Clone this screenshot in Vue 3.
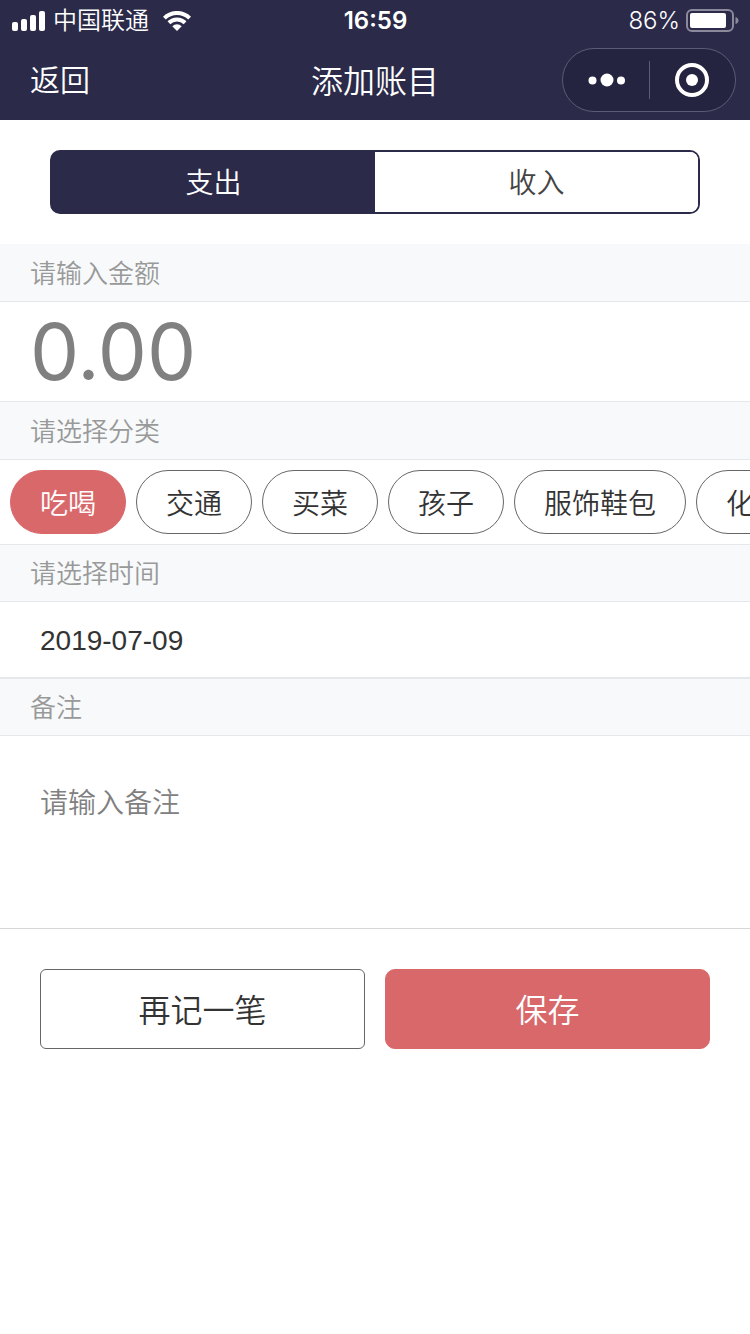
<template>
  <div class="page">
    <header class="header">
      <div class="status-bar">
        <div class="status-left">
          <svg class="signal" width="34" height="20" viewBox="0 0 34 20" aria-hidden="true">
            <rect x="0" y="11" width="6" height="9" rx="2" />
            <rect x="9" y="8" width="6" height="12" rx="2" />
            <rect x="18" y="4" width="6" height="16" rx="2" />
            <rect x="27" y="0" width="6" height="20" rx="2" />
          </svg>
          <span>中国联通</span>
          <svg class="wifi" width="28" height="20" viewBox="0 0 28 20" aria-hidden="true">
            <path d="M14 20l-4.7-4.8a6.7 6.7 0 0 1 9.4 0z" />
            <path class="wave" d="M5.9 11.7a11.6 11.6 0 0 1 16.2 0" />
            <path class="wave" d="M1.4 7.1a18 18 0 0 1 25.2 0" />
          </svg>
        </div>
        <span class="status-time">16:59</span>
        <div class="status-right">
          <span>86%</span>
          <svg class="battery" width="53" height="24" viewBox="0 0 53 24" aria-hidden="true">
            <rect class="shell" x="1" y="1" width="46" height="21" rx="5" />
            <rect class="level" x="4" y="4" width="36" height="15" rx="2" />
            <path class="cap" d="M49.5 8c4 1 4 6 0 7z" />
          </svg>
        </div>
      </div>
      <nav class="nav-bar">
        <a class="back" href="#" @click.prevent>返回</a>
        <h1 class="nav-title">添加账目</h1>
        <div class="capsule">
          <button class="capsule-button" type="button" aria-label="更多">
            <svg width="38" height="14" viewBox="0 0 38 14">
              <circle cx="5.5" cy="7.5" r="4" />
              <circle cx="20" cy="7" r="6.5" />
              <circle cx="34" cy="7.5" r="4" />
            </svg>
          </button>
          <button class="capsule-button" type="button" aria-label="关闭">
            <svg width="34" height="34" viewBox="0 0 34 34">
              <circle class="ring" cx="17" cy="17" r="15" />
              <circle cx="17" cy="17" r="6" />
            </svg>
          </button>
        </div>
      </nav>
    </header>

    <main>
      <div class="tabs">
        <button
          v-for="tab in tabs"
          :key="tab.value"
          type="button"
          class="tab"
          :class="{ active: form.type === tab.value }"
          @click="form.type = tab.value"
        >{{ tab.label }}</button>
      </div>

      <form @submit.prevent>
        <label class="section-title" for="amount">请输入金额</label>
        <input id="amount" v-model="form.amount" class="amount" type="text" inputmode="decimal" placeholder="0.00" />

        <div id="categoryTitle" class="section-title">请选择分类</div>
        <div class="categories" role="group" aria-labelledby="categoryTitle">
          <button
            v-for="item in categories"
            :key="item"
            type="button"
            class="category"
            :class="{ active: form.category === item }"
            @click="form.category = item"
          >{{ item }}</button>
        </div>

        <label class="section-title line-top" for="date">请选择时间</label>
        <input id="date" v-model="form.date" class="date" type="text" readonly />

        <label class="section-title line-top" for="remark">备注</label>
        <textarea id="remark" v-model="form.remark" class="remark" placeholder="请输入备注"></textarea>

        <div class="actions">
          <button class="action" type="button" @click="reset">再记一笔</button>
          <button class="action primary" type="submit">保存</button>
        </div>
      </form>
    </main>
  </div>
</template>

<script setup>
import { ref } from 'vue'

const tabs = [
  { value: 'expense', label: '支出' },
  { value: 'income', label: '收入' }
]

const categories = ['吃喝', '交通', '买菜', '孩子', '服饰鞋包', '化妆']

const form = ref({
  type: 'expense',
  amount: '',
  category: '吃喝',
  date: '2019-07-09',
  remark: ''
})

const reset = () => {
  form.value.amount = ''
  form.value.remark = ''
}
</script>

<style>
body {
  margin: 0;
  background: #fff;
}
</style>

<style scoped>
.page {
  font-family: "Liberation Sans", "Noto Sans CJK SC", sans-serif;
  font-weight: 350;
  color: #333;
}

button,
input,
textarea {
  box-sizing: border-box;
  margin: 0;
  padding: 0;
  border: none;
  border-radius: 0;
  outline: none;
  background: none;
  color: inherit;
  font: inherit;
}

button {
  cursor: pointer;
}

.header {
  background: #2b2a49;
  color: #fff;
}

/* 状态栏 */
.status-bar {
  box-sizing: border-box;
  display: grid;
  grid-template-columns: 1fr auto 1fr;
  align-items: center;
  height: 40px;
  padding: 2px 11px 0 12px;
  font-family: Inter, "Noto Sans CJK SC", sans-serif;
  font-size: 24px;
  line-height: 38px;
}

.status-left,
.status-right {
  display: flex;
  align-items: center;
}

.status-left {
  gap: 7px;
}

.status-right {
  justify-content: flex-end;
  gap: 6px;
}

.status-time {
  font-weight: 600;
}

.signal,
.wifi {
  fill: #fff;
}

.wifi {
  margin-left: 7px;
}

.wave {
  fill: none;
  stroke: #fff;
  stroke-width: 4;
}

.shell {
  fill: none;
  stroke: #8b8a9c;
  stroke-width: 2;
}

.level {
  fill: #fff;
}

.cap {
  fill: #8b8a9c;
}

/* 导航栏 */
.nav-bar {
  display: grid;
  grid-template-columns: minmax(0, 1fr) auto minmax(0, 1fr);
  align-items: center;
  height: 80px;
  padding: 0 14px;
}

.back {
  padding: 0 16px 4px;
  color: #fff;
  font-size: 30px;
  text-decoration: none;
}

.nav-title {
  margin: 0;
  padding-bottom: 2px;
  font-size: 32px;
  font-weight: 350;
}

.capsule {
  box-sizing: border-box;
  display: flex;
  justify-self: end;
  width: 174px;
  height: 64px;
  border: 1px solid #5c5b75;
  border-radius: 32px;
  background: #242340;
}

.capsule-button {
  position: relative;
  display: flex;
  flex: 1;
  align-items: center;
  justify-content: center;
}

.capsule-button svg {
  fill: #fff;
}

.capsule-button .ring {
  fill: none;
  stroke: #fff;
  stroke-width: 4;
}

.capsule-button + .capsule-button::before {
  content: "";
  position: absolute;
  top: 12px;
  bottom: 12px;
  left: 0;
  width: 1px;
  background: #5c5b75;
}

/* 支出 / 收入 */
.tabs {
  display: flex;
  height: 60px;
  margin: 30px 50px;
  border: 2px solid #2b2a49;
  border-radius: 10px;
  background: linear-gradient(#2b2a49, #2b2a49) left / 50% 100% no-repeat;
  overflow: hidden;
}

.tab {
  flex: 1;
  padding-bottom: 2px;
  background: #fff;
  color: #444;
  font-size: 28px;
}

.tab.active {
  background: #2b2a49;
  color: #fff;
}

.section-title {
  box-sizing: border-box;
  display: block;
  height: 58px;
  padding: 0 30px;
  border-bottom: 1px solid #e4e8ea;
  background: #f7f9fb;
  color: #999;
  font-size: 26px;
  line-height: 60px;
}

.line-top {
  border-top: 1px solid #e4e8ea;
  line-height: 58px;
}

.amount {
  display: block;
  width: 100%;
  height: 100px;
  padding: 0 30px;
  border-bottom: 1px solid #e4e8ea;
  font-family: Inter, sans-serif;
  font-size: 78px;
  font-weight: 400;
}

.amount::placeholder,
.remark::placeholder {
  color: #808080;
  opacity: 1;
}

.categories {
  display: flex;
  gap: 10px;
  padding: 10px;
  overflow-x: auto;
  scrollbar-width: none;
}

.category {
  flex: none;
  height: 64px;
  padding: 0 29px;
  border: 1px solid #666;
  border-radius: 32px;
  font-size: 28px;
}

.category.active {
  border-color: #d9686b;
  background: #d9686b;
  color: #fff;
}

.date {
  display: block;
  width: 100%;
  height: 76px;
  padding: 2px 40px 0;
  border-bottom: 1px solid #e4e8ea;
  font-size: 28px;
}

.remark {
  display: block;
  width: 100%;
  height: 193px;
  padding: 48px 40px;
  border-bottom: 1px solid #d6d6d6;
  font-size: 28px;
  line-height: 40px;
  resize: none;
}

.actions {
  display: flex;
  gap: 20px;
  padding: 40px;
}

.action {
  flex: 1;
  height: 80px;
  padding-bottom: 2px;
  border: 1px solid #666;
  border-radius: 6px;
  font-size: 32px;
}

.action.primary {
  border-color: #d9686b;
  border-radius: 10px;
  background: #d9686b;
  color: #fff;
}
</style>
